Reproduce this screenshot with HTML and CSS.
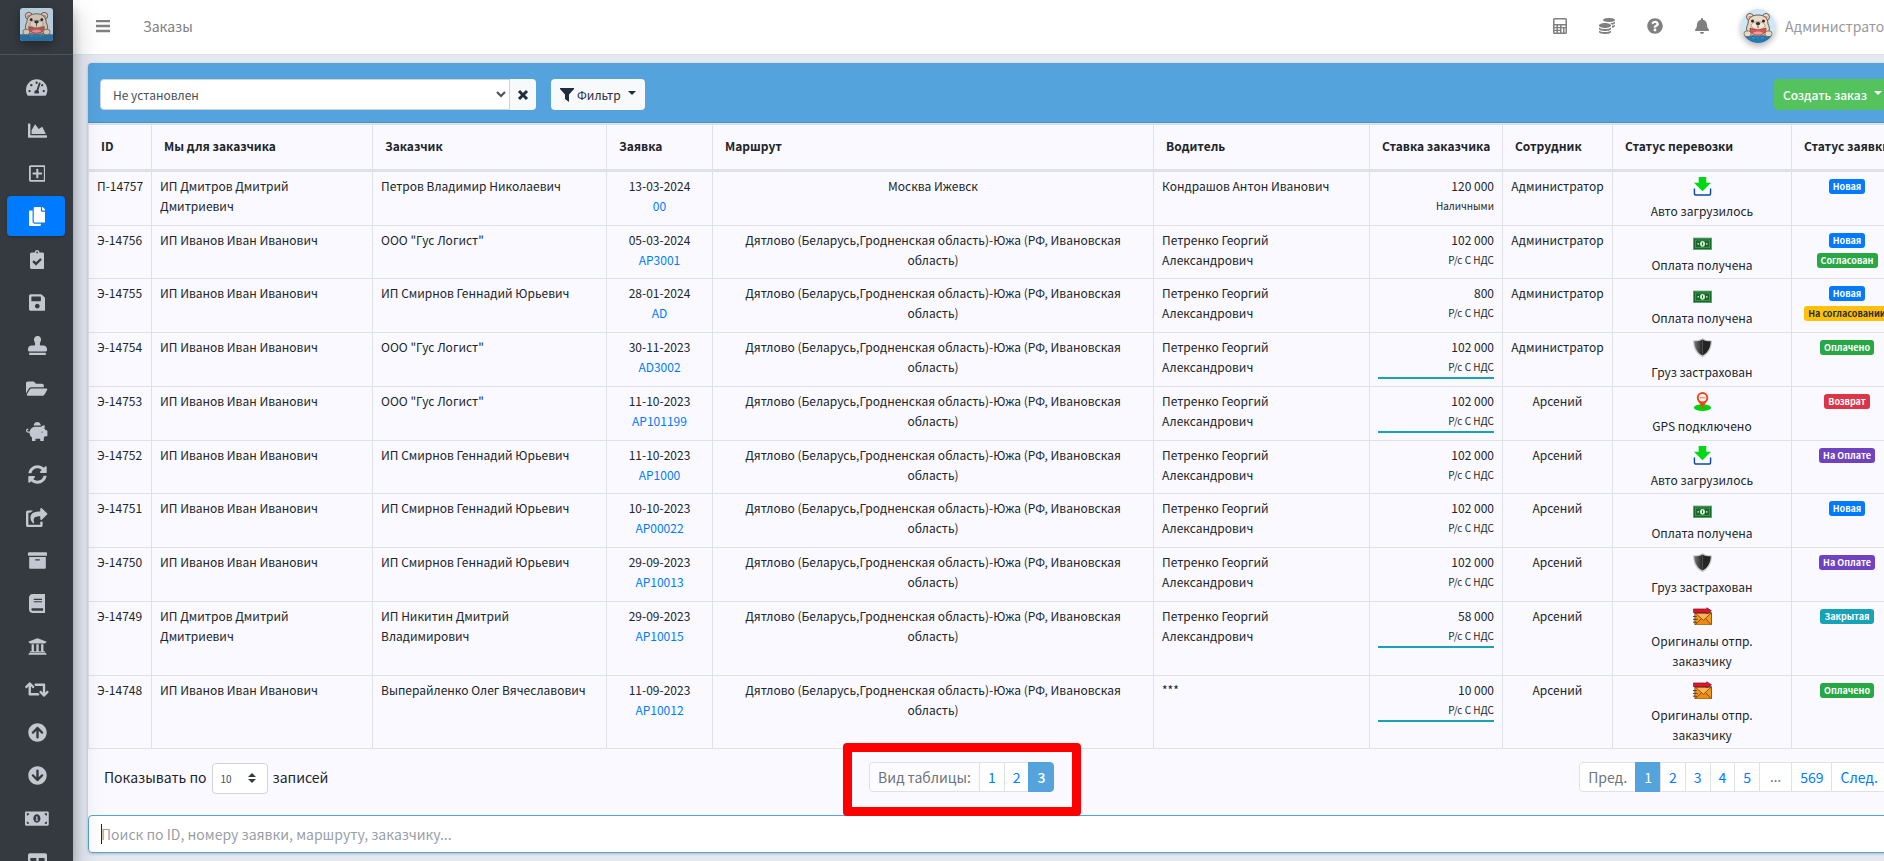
FILE: index.html
```
<!DOCTYPE html>
<html lang="ru">
<head>
    <meta charset="UTF-8">
    <meta name="viewport" content="width=device-width, initial-scale=1.0">
    <title>Заказы</title>
    <link rel="stylesheet" href="styles.css">
</head>
<body>
    <!-- Icon sprite -->
    <svg class="sprite" aria-hidden="true">
        <defs>
            <linearGradient id="shield-dark" x1="0" x2="1"><stop offset="0" stop-color="#777"/><stop offset="1" stop-color="#222"/></linearGradient>
        </defs>
        <symbol id="bear" viewBox="0 0 34 34">
            <rect width="34" height="34" fill="#cfe6f7"/>
            <circle cx="9" cy="8" r="3.5" fill="#efe3cf" stroke="#6b5a4c"/>
            <circle cx="9" cy="8.500" r="1.700" fill="#e58a90"/>
            <circle cx="25" cy="8" r="3.500" fill="#efe3cf" stroke="#6b5a4c"/>
            <circle cx="25" cy="8.500" r="1.700" fill="#e58a90"/>
            <path d="M7 15c0-6 4-9 10-9s10 3 10 9c1 2 2 4 1 7-2 4-6 5-11 5S8 26 6 22c-1-3 0-5 1-7z" fill="#e9dcc6" stroke="#6b5a4c"/>
            <path d="M9 19c3 1.500 13 1.500 16 0 .5 4-2 7-8 7s-8.500-3-8-7z" fill="#d9534f" stroke="#6b3a35" stroke-width=".6"/>
            <path d="M12 24c2-2 8-2 10 0-1 2-9 2-10 0z" fill="#f59aa0"/>
            <ellipse cx="17" cy="16.500" rx="7" ry="3.800" fill="#f3e8d6" stroke="#8b7a69" stroke-width=".6"/>
            <ellipse cx="17" cy="14.500" rx="2.300" ry="1.500" fill="#3a2d28"/>
            <path d="M17 15v4" stroke="#3a2d28" stroke-width=".8"/>
            <circle cx="11.500" cy="12" r="1.500" fill="#2c2320"/>
            <circle cx="22.500" cy="12" r="1.500" fill="#2c2320"/>
            <path d="M0 27h34v7H0z" fill="#2a76b0"/>
            <path d="M11 29h3M16 29h2M20 29h3" stroke="#1fb59a"/>
            <rect x="3" y="22" width="7" height="5.500" rx="2.500" fill="#e9dcc6" stroke="#6b5a4c" stroke-width=".8"/>
            <rect x="24" y="22" width="7" height="5.500" rx="2.500" fill="#e9dcc6" stroke="#6b5a4c" stroke-width=".8"/>
        </symbol>
        <symbol id="loaded" viewBox="0 0 20 20">
            <path d="M6 0h8v6h5l-9 9-9-9h5z" fill="#00d813"/>
            <path d="M1.500 12v5q0 2 2 2h13q2 0 2-2v-5" fill="none" stroke="#0b4aa2" stroke-width="1.500"/>
        </symbol>
        <symbol id="paid" viewBox="0 0 20 20">
            <rect x="0" y="7" width="20" height="13" fill="#5fa76b"/>
            <rect x="1" y="8" width="18" height="11" fill="#17692a"/>
            <rect x="2.500" y="9.500" width="15" height="8" fill="none" stroke="#4f9c5c" stroke-width=".8"/>
            <ellipse cx="10" cy="13.500" rx="2.600" ry="3" fill="#d4ecd6"/>
            <path d="M10 12v3" stroke="#17692a"/>
            <circle cx="5.500" cy="13.500" r=".9" fill="#c4e4c8"/>
            <circle cx="14.500" cy="13.500" r=".9" fill="#c4e4c8"/>
        </symbol>
        <symbol id="insured" viewBox="0 0 20 20">
            <path d="M10 0c3 2 6 2.500 10 2.500C20 10 17 17 10 20 3 17 0 10 0 2.500 4 2.500 7 2 10 0z" fill="#c9c9c9"/>
            <path d="M10 1.500v17C4 15.500 1.500 10 1.300 3.500 5 3.400 7.500 3 10 1.500z" fill="url(#shield-dark)"/>
            <path d="M10 1.500v17c6-3 8.500-8.500 8.700-15C15 3.400 12.500 3 10 1.500z" fill="#242424"/>
        </symbol>
        <symbol id="gps" viewBox="0 0 20 20">
            <ellipse cx="10" cy="16.500" rx="9" ry="3.500" fill="#00d20e"/>
            <path d="M10 17C8 12 4 10 4 6a6 6 0 0 1 12 0c0 4-4 6-6 11z" fill="#ff3d0d"/>
            <circle cx="10" cy="6" r="4" fill="#fff"/>
            <path d="M7 6h6" stroke="#ff8f70" stroke-width="1.500"/>
        </symbol>
        <symbol id="sent" viewBox="0 0 20 20">
            <rect x="2" y="6" width="17.500" height="12.500" fill="#f9971d" stroke="#5f3b13" stroke-width=".8"/>
            <path d="M2.500 18.500l6-6h5l5.500 6z" fill="#ef8a10"/>
            <path d="M2.500 6.500l8.500 7.500 8-7.500z" fill="#ffb652" stroke="#5f3b13" stroke-width=".8"/>
            <path d="M2.500 18.500l6-6M19 18.500l-5.500-6" stroke="#5f3b13" stroke-width=".8"/>
            <path d="M.5 2h14V.8l5 3.200-5 3.200V6H.500z" fill="#e8112d" stroke="#4d1218" stroke-width=".6"/>
            <path d="M0 10h4M0 13h5M0 16h4" stroke="#5f3b13"/>
        </symbol>
    </svg>

    <div class="wrapper">
        <aside class="sidebar">
            <a href="#" class="brand" aria-label="Главная"><svg class="brand-logo"><use href="#bear"/></svg></a>
            <nav class="side-nav">
                <a href="#" aria-label="Панель"><svg viewBox="0 0 576 512"><path d="M288 32C128.940 32 0 160.940 0 320c0 52.800 14.250 102.260 39.060 144.800 5.610 9.620 16.300 15.200 27.440 15.200h443c11.140 0 21.830-5.580 27.440-15.200C561.750 422.260 576 372.800 576 320c0-159.060-128.940-288-288-288zm0 64c14.710 0 26.580 10.130 30.320 23.650-1.110 2.260-2.640 4.230-3.450 6.670l-9.220 27.670c-5.130 3.490-10.970 6.010-17.640 6.010-17.670 0-32-14.330-32-32S270.330 96 288 96zM96 384c-17.670 0-32-14.330-32-32s14.330-32 32-32 32 14.330 32 32-14.330 32-32 32zm48-160c-17.670 0-32-14.330-32-32s14.330-32 32-32 32 14.330 32 32-14.330 32-32 32zm246.770-72.410l-61.330 184C343.130 347.330 352 364.540 352 384c0 11.720-3.380 22.550-8.880 32H232.880c-5.500-9.450-8.880-20.280-8.880-32 0-33.940 26.500-61.430 59.900-63.590l61.340-184.010c4.170-12.560 17.730-19.450 30.360-15.170 12.570 4.190 19.350 17.790 15.170 30.360zm14.660 57.200l15.520-46.550c3.470-1.290 7.130-2.230 11.050-2.230 17.670 0 32 14.330 32 32s-14.330 32-32 32c-11.380-.010-20.890-6.280-26.570-15.220zM480 384c-17.670 0-32-14.330-32-32s14.330-32 32-32 32 14.330 32 32-14.330 32-32 32z"/></svg></a>
                <a href="#" aria-label="Графики"><svg viewBox="0 0 512 512"><path d="M500 384c6.600 0 12 5.400 12 12v40c0 6.600-5.400 12-12 12H12c-6.600 0-12-5.400-12-12V76c0-6.600 5.400-12 12-12h40c6.600 0 12 5.400 12 12v308h436zM372.700 159.500L288 216l-85.300-113.700c-5.100-6.800-15.500-6.300-19.900 1L96 248v104h384l-89.900-187.800c-3.200-6.500-11.400-8.700-17.400-4.700z"/></svg></a>
                <a href="#" aria-label="Добавить"><svg viewBox="0 0 448 512"><path d="M352 240v32c0 6.600-5.400 12-12 12h-88v88c0 6.600-5.400 12-12 12h-32c-6.600 0-12-5.400-12-12v-88h-88c-6.600 0-12-5.400-12-12v-32c0-6.600 5.400-12 12-12h88v-88c0-6.600 5.400-12 12-12h32c6.600 0 12 5.400 12 12v88h88c6.600 0 12 5.400 12 12zm96-160v352c0 26.500-21.500 48-48 48H48c-26.500 0-48-21.500-48-48V80c0-26.500 21.500-48 48-48h352c26.500 0 48 21.500 48 48zm-48 346V86c0-3.300-2.700-6-6-6H54c-3.300 0-6 2.700-6 6v340c0 3.300 2.700 6 6 6h340c3.300 0 6-2.700 6-6z"/></svg></a>
                <a href="#" class="active" aria-label="Заказы"><svg viewBox="0 0 448 512"><path d="M320 448v40c0 13.255-10.745 24-24 24H24c-13.255 0-24-10.745-24-24V120c0-13.255 10.745-24 24-24h72v296c0 30.879 25.121 56 56 56h168zm0-344V0H152c-13.255 0-24 10.745-24 24v368c0 13.255 10.745 24 24 24h272c13.255 0 24-10.745 24-24V128H344c-13.200 0-24-10.800-24-24zm120.971-31.029L375.029 7.029A24 24 0 0 0 358.059 0H352v96h96v-6.059a24 24 0 0 0-7.029-16.970z"/></svg></a>
                <a href="#" aria-label="Задачи"><svg viewBox="0 0 384 512"><path d="M336 64h-80c0-35.300-28.700-64-64-64s-64 28.700-64 64H48C21.500 64 0 85.500 0 112v352c0 26.500 21.500 48 48 48h288c26.500 0 48-21.500 48-48V112c0-26.500-21.500-48-48-48zM192 40c13.300 0 24 10.700 24 24s-10.700 24-24 24-24-10.700-24-24 10.700-24 24-24zm121.200 231.800l-143 141.800c-4.700 4.700-12.300 4.600-17-.1l-82.600-83.300c-4.700-4.700-4.600-12.300.1-17L99.100 285c4.700-4.700 12.300-4.600 17 .1l46 46.400 106-105.200c4.700-4.700 12.300-4.600 17 .1l28.200 28.400c4.700 4.800 4.600 12.300-.1 17z"/></svg></a>
                <a href="#" aria-label="Сохранённые"><svg viewBox="0 0 448 512"><path d="M433.941 129.941l-83.882-83.882A48 48 0 0 0 316.118 32H48C21.490 32 0 53.490 0 80v352c0 26.510 21.490 48 48 48h352c26.510 0 48-21.490 48-48V163.882a48 48 0 0 0-14.059-33.941zM224 416c-35.346 0-64-28.654-64-64 0-35.346 28.654-64 64-64s64 28.654 64 64c0 35.346-28.654 64-64 64zm96-304.520V212c0 6.627-5.373 12-12 12H76c-6.627 0-12-5.373-12-12V108c0-6.627 5.373-12 12-12h228.520c3.183 0 6.235 1.264 8.485 3.515l3.480 3.480A11.996 11.996 0 0 1 320 111.480z"/></svg></a>
                <a href="#" aria-label="Печати"><svg viewBox="0 0 512 512"><path d="M32 512h448v-64H32v64zm384-256h-66.560c-16.260 0-29.440-13.180-29.440-29.440v-9.460c0-27.370 8.880-53.410 21.460-77.720 9.110-17.610 12.900-38.390 9.050-60.420-6.770-38.780-38.470-70.700-77.260-77.450C212.620-9.040 160 37.330 160 96c0 14.160 3.120 27.540 8.690 39.580C182.020 164.430 192 194.700 192 226.490v.070c0 16.260-13.180 29.440-29.440 29.440H96c-53.020 0-96 42.980-96 96v32c0 17.670 14.330 32 32 32h448c17.670 0 32-14.330 32-32v-32c0-53.020-42.980-96-96-96z"/></svg></a>
                <a href="#" aria-label="Документы"><svg viewBox="0 0 576 512"><path d="M572.694 292.093L500.270 416.248A63.997 63.997 0 0 1 444.989 448H45.025c-18.523 0-30.064-20.093-20.731-36.093l72.424-124.155A64 64 0 0 1 152 256h399.964c18.523 0 30.064 20.093 20.730 36.093zM152 224h328v-48c0-26.510-21.490-48-48-48H272l-64-64H48C21.490 64 0 85.490 0 112v278.046l69.077-118.418C86.214 242.250 117.989 224 152 224z"/></svg></a>
                <a href="#" aria-label="Финансы"><svg viewBox="0 0 576 512"><path d="M560 224h-29.500c-8.800-20-21.600-37.700-37.400-52.500L512 96h-32c-29.400 0-55.400 13.500-73 34.300-7.600-1.100-15.100-2.300-23-2.300H256c-77.400 0-141.900 55-156.800 128H56c-14.800 0-26.500-13.500-23.500-28.800C34.700 215.800 45.400 208 57 208h1c3.300 0 6-2.700 6-6v-20c0-3.300-2.700-6-6-6-28.500 0-53.900 20.400-57.500 48.600C-3.900 258.800 22.700 288 56 288h40c0 52.200 25.400 98.100 64 127.300V496c0 8.800 7.200 16 16 16h64c8.800 0 16-7.200 16-16v-48h128v48c0 8.800 7.200 16 16 16h64c8.800 0 16-7.200 16-16v-80.700c11.800-8.900 22.300-19.400 31.300-31.300H560c8.800 0 16-7.200 16-16V240c0-8.800-7.200-16-16-16zm-128 64c-8.800 0-16-7.200-16-16s7.200-16 16-16 16 7.200 16 16-7.200 16-16 16zM256 96h128c5.400 0 10.700.4 15.900.8 0-.3.1-.5.1-.8 0-53-43-96-96-96s-96 43-96 96c0 2.100.5 4.100.6 6.200 15.200-3.900 31-6.200 47.400-6.200z"/></svg></a>
                <a href="#" aria-label="Обмен"><svg viewBox="0 0 512 512"><path d="M370.720 133.280C339.458 104.008 298.888 87.962 255.848 88c-77.458.068-144.328 53.178-162.791 126.850-1.344 5.363-6.122 9.150-11.651 9.150H24.103c-7.498 0-13.194-6.807-11.807-14.176C33.933 94.924 134.813 8 256 8c66.448 0 126.791 26.136 171.315 68.685L463.030 40.970C478.149 25.851 504 36.559 504 57.941V192c0 13.255-10.745 24-24 24H345.941c-21.382 0-32.090-25.851-16.971-40.971l41.750-41.749zM32 296h134.059c21.382 0 32.090 25.851 16.971 40.971l-41.750 41.750c31.262 29.273 71.835 45.319 114.876 45.280 77.418-.070 144.315-53.144 162.787-126.849 1.344-5.363 6.122-9.150 11.651-9.150h57.304c7.498 0 13.194 6.807 11.807 14.176C478.067 417.076 377.187 504 256 504c-66.448 0-126.791-26.136-171.315-68.685L48.970 471.030C33.851 486.149 8 475.441 8 454.059V320c0-13.255 10.745-24 24-24z"/></svg></a>
                <a href="#" aria-label="Отправить"><svg viewBox="0 0 576 512"><path d="M568.482 177.448L424.479 313.433C409.300 327.768 384 317.140 384 295.985v-71.963c-144.575.970-205.566 35.113-164.775 171.353 4.483 14.973-12.846 26.567-25.006 17.330C155.252 383.105 120 326.488 120 269.339c0-143.937 117.599-172.500 264-173.312V24.012c0-21.174 25.317-31.768 40.479-17.448l144.003 135.988c10.020 9.463 10.028 25.425 0 34.896zM384 379.128V448H64V128h50.916a11.990 11.990 0 0 0 8.648-3.693c14.953-15.568 32.237-27.890 51.014-37.676C185.708 80.830 181.584 64 169.033 64H48C21.490 64 0 85.490 0 112v352c0 26.510 21.490 48 48 48h352c26.510 0 48-21.490 48-48v-88.806c0-8.288-8.197-14.066-16.011-11.302a71.830 71.830 0 0 1-34.189 3.377c-7.270-1.046-13.800 4.514-13.800 11.859z"/></svg></a>
                <a href="#" aria-label="Архив"><svg viewBox="0 0 512 512"><path d="M32 448c0 17.700 14.300 32 32 32h384c17.700 0 32-14.300 32-32V160H32v288zm160-212c0-6.600 5.400-12 12-12h104c6.600 0 12 5.400 12 12v8c0 6.600-5.400 12-12 12H204c-6.600 0-12-5.400-12-12v-8zM480 32H32C14.300 32 0 46.300 0 64v48c0 8.800 7.200 16 16 16h480c8.800 0 16-7.200 16-16V64c0-17.700-14.300-32-32-32z"/></svg></a>
                <a href="#" aria-label="Справочники"><svg viewBox="0 0 448 512"><path d="M448 360V24c0-13.300-10.700-24-24-24H96C43 0 0 43 0 96v320c0 53 43 96 96 96h328c13.300 0 24-10.700 24-24v-16c0-7.500-3.500-14.300-8.900-18.700-4.200-15.400-4.200-59.300 0-74.700 5.400-4.300 8.900-11.100 8.900-18.600zM128 134c0-3.300 2.700-6 6-6h212c3.300 0 6 2.700 6 6v20c0 3.300-2.700 6-6 6H134c-3.300 0-6-2.700-6-6v-20zm0 64c0-3.300 2.700-6 6-6h212c3.300 0 6 2.700 6 6v20c0 3.300-2.700 6-6 6H134c-3.300 0-6-2.700-6-6v-20zm253.400 250H96c-17.700 0-32-14.300-32-32 0-17.600 14.400-32 32-32h285.400c-1.900 17.100-1.900 46.900 0 64z"/></svg></a>
                <a href="#" aria-label="Банк"><svg viewBox="0 0 512 512"><path d="M496 128v16a8 8 0 0 1-8 8h-24v12c0 6.627-5.373 12-12 12H60c-6.627 0-12-5.373-12-12v-12H24a8 8 0 0 1-8-8v-16a8 8 0 0 1 4.941-7.392l232-88a7.996 7.996 0 0 1 6.118 0l232 88A8 8 0 0 1 496 128zm-24 304H40c-13.255 0-24 10.745-24 24v16a8 8 0 0 0 8 8h464a8 8 0 0 0 8-8v-16c0-13.255-10.745-24-24-24zM96 192v192H60c-6.627 0-12 5.373-12 12v20h416v-20c0-6.627-5.373-12-12-12h-36V192h-64v192h-64V192h-64v192h-64V192H96z"/></svg></a>
                <a href="#" aria-label="Переводы"><svg viewBox="0 0 640 512"><path d="M629.657 343.598L528.971 444.284c-9.373 9.372-24.568 9.372-33.941 0L394.343 343.598c-9.373-9.373-9.373-24.569 0-33.941l10.823-10.823c9.562-9.562 25.133-9.340 34.419.492L480 342.118V160H292.451a24.005 24.005 0 0 1-16.971-7.029l-16-16C244.361 121.851 255.069 96 276.451 96H520c13.255 0 24 10.745 24 24v222.118l40.416-42.792c9.285-9.831 24.856-10.054 34.419-.492l10.823 10.823c9.372 9.372 9.372 24.569-.001 33.941zm-265.138 15.431A23.999 23.999 0 0 0 347.548 352H160V169.881l40.416 42.792c9.286 9.831 24.856 10.054 34.419.491l10.822-10.822c9.373-9.373 9.373-24.569 0-33.941L144.971 67.716c-9.373-9.373-24.569-9.373-33.941 0L10.343 168.402c-9.373 9.373-9.373 24.569 0 33.941l10.822 10.822c9.562 9.562 25.133 9.340 34.419-.491L96 169.881V392c0 13.255 10.745 24 24 24h243.549c21.382 0 32.090-25.851 16.971-40.971l-16.001-16z"/></svg></a>
                <a href="#" aria-label="Исходящие"><svg viewBox="0 0 512 512"><path d="M8 256C8 119 119 8 256 8s248 111 248 248-111 248-248 248S8 393 8 256zm143.600 28.900l72.400-75.500V392c0 13.300 10.700 24 24 24h16c13.300 0 24-10.700 24-24V209.400l72.400 75.500c9.300 9.700 24.800 9.900 34.300.4l10.900-11c9.400-9.400 9.400-24.600 0-33.900L273 107.700c-9.400-9.400-24.600-9.400-33.900 0L106.300 240.400c-9.400 9.400-9.400 24.600 0 33.900l10.900 11c9.600 9.500 25.100 9.300 34.400-.4z"/></svg></a>
                <a href="#" aria-label="Входящие"><svg viewBox="0 0 512 512"><path transform="rotate(180 256 256)" d="M8 256C8 119 119 8 256 8s248 111 248 248-111 248-248 248S8 393 8 256zm143.600 28.900l72.400-75.500V392c0 13.300 10.700 24 24 24h16c13.300 0 24-10.700 24-24V209.400l72.400 75.500c9.300 9.700 24.800 9.900 34.300.4l10.900-11c9.400-9.400 9.400-24.600 0-33.900L273 107.700c-9.400-9.400-24.600-9.400-33.900 0L106.300 240.400c-9.400 9.400-9.400 24.600 0 33.900l10.900 11c9.600 9.500 25.100 9.300 34.400-.4z"/></svg></a>
                <a href="#" aria-label="Касса"><svg viewBox="0 0 640 512"><path d="M608 64H32C14.330 64 0 78.330 0 96v320c0 17.670 14.330 32 32 32h576c17.670 0 32-14.330 32-32V96c0-17.670-14.330-32-32-32zM48 400v-64c35.350 0 64 28.650 64 64H48zm0-224v-64h64c0 35.350-28.650 64-64 64zm272 192c-53.020 0-96-50.150-96-112 0-61.860 42.980-112 96-112s96 50.130 96 112c0 61.870-43 112-96 112zm272 32h-64c0-35.350 28.650-64 64-64v64zm0-224c-35.350 0-64-28.650-64-64h64v64zM300 200h36v92h18v24h-68v-24h18v-60h-16v-22z"/></svg></a>
                <a href="#" aria-label="Таблицы"><svg viewBox="0 0 512 512"><path fill-rule="evenodd" d="M48 32h416q48 0 48 48v352q0 48-48 48H48q-48 0-48-48V80q0-48 48-48zm16 128v96h160v-96zm224 0v96h160v-96zM64 320v96h160v-96zm224 0v96h160v-96z"/></svg></a>
            </nav>
        </aside>

        <div class="main">
            <header class="topbar">
                <button type="button" class="icon-btn" aria-label="Меню"><svg viewBox="0 0 448 512"><path d="M0 60h448v76H0zM0 218h448v76H0zM0 376h448v76H0z"/></svg></button>
                <a href="#" class="page-link">Заказы</a>
                <div class="tools">
                    <button type="button" class="icon-btn" aria-label="Калькулятор"><svg viewBox="0 0 448 512"><path fill-rule="evenodd" d="M48 0h352q48 0 48 48v416q0 48-48 48H48q-48 0-48-48V48Q0 0 48 0zm0 48v144h352V48zm0 192v48h64v-48zm112 0v48h64v-48zm112 0v48h128v-48zM48 328v48h64v-48zm112 0v48h64v-48zm112 0v136h48V328zm96 0v136h32V328zM48 416v48h64v-48zm112 0v48h64v-48z"/></svg></button>
                    <button type="button" class="icon-btn" aria-label="Баланс"><svg viewBox="0 0 512 512"><path d="M0 405.300V448c0 35.300 86 64 192 64s192-28.700 192-64v-42.700C342.700 434.400 267.200 448 192 448S41.300 434.400 0 405.300zM320 128c106 0 192-28.700 192-64S426 0 320 0 128 28.700 128 64s86 64 192 64zM0 300.400V352c0 35.300 86 64 192 64s192-28.700 192-64v-51.600c-41.300 34-116.900 51.600-192 51.600S41.300 334.400 0 300.400zm416 11c57.300-11.100 96-31.700 96-55.400v-42.700c-23.200 16.400-57.300 27.600-96 34.500v63.600zM192 160C86 160 0 195.800 0 240s86 80 192 80 192-35.800 192-80-86-80-192-80zm219.300 56.300c60-10.800 100.700-32 100.700-56.300v-42.700c-35.500 25.100-96.500 38.600-160.700 41.800 29.500 14.300 51.200 33.500 60 57.200z"/></svg></button>
                    <button type="button" class="icon-btn" aria-label="Помощь"><svg viewBox="0 0 512 512"><path d="M504 256c0 137-111 248-248 248S8 393 8 256C8 119.100 119 8 256 8s248 111.100 248 248zM262.700 90c-54.500 0-89.300 23-116.500 63.800-3.500 5.300-2.400 12.400 2.700 16.300l34.700 26.300c5.200 3.900 12.600 3 16.700-2.100 17.900-22.700 30.100-35.800 57.300-35.800 20.400 0 45.700 13.100 45.700 33 0 15-12.400 22.700-32.500 34C247.100 238.500 216 254.900 216 296v4c0 6.600 5.400 12 12 12h56c6.600 0 12-5.400 12-12v-1.300c0-28.500 83.200-29.600 83.200-106.700 0-58-60.200-102-116.500-102zM256 338c-25.400 0-46 20.600-46 46s20.600 46 46 46 46-20.600 46-46-20.600-46-46-46z"/></svg></button>
                    <button type="button" class="icon-btn" aria-label="Уведомления"><svg viewBox="0 0 448 512"><path d="M224 512c35.300 0 64-28.700 64-64H160c0 35.300 28.600 64 64 64zm215.400-149.700c-19.300-20.800-55.500-52-55.500-154.300 0-77.700-54.500-139.900-127.900-155.200V32c0-17.700-14.300-32-32-32s-32 14.300-32 32v20.800C118.600 68.100 64.100 130.300 64.100 208c0 102.300-36.200 133.500-55.500 154.300-6 6.500-8.700 14.200-8.600 21.700.1 16.400 13 32 32.100 32h383.800c19.100 0 32-15.600 32.100-32 .1-7.500-2.600-15.300-8.600-21.700z"/></svg></button>
                    <a href="#" class="user"><svg class="avatar"><use href="#bear"/></svg>Администратор</a>
                </div>
            </header>

            <main class="content">
                <section class="card">
                    <div class="card-header">
                        <div class="preset">
                            <select class="preset-select" aria-label="Набор фильтров"><option>Не установлен</option></select>
                            <button type="button" class="preset-clear" aria-label="Сбросить"><svg viewBox="0 0 12 12"><path d="M2 2l8 8M10 2l-8 8"/></svg></button>
                        </div>
                        <button type="button" class="btn btn-light"><svg class="funnel" viewBox="0 0 14 14"><path d="M0 0h14v1L9 6.500V14L5 11V6.500L0 1z"/></svg>Фильтр<span class="caret"></span></button>
                        <button type="button" class="btn btn-green">Создать заказ<span class="caret"></span></button>
                    </div>

                    <table class="orders">
                        <colgroup>
                            <col class="c-id"><col class="c-we"><col class="c-customer"><col class="c-request"><col class="c-route">
                            <col class="c-driver"><col class="c-rate"><col class="c-staff"><col class="c-delivery"><col class="c-status">
                        </colgroup>
                        <thead>
                            <tr>
                                <th>ID</th><th>Мы для заказчика</th><th>Заказчик</th><th>Заявка</th><th>Маршрут</th>
                                <th>Водитель</th><th>Ставка заказчика</th><th>Сотрудник</th><th>Статус перевозки</th><th>Статус заявки</th>
                            </tr>
                        </thead>
                        <tbody id="orders-body"></tbody>
                    </table>

                    <div class="table-footer">
                        <div class="length">
                            <label for="page-length">Показывать по</label>
                            <span class="length-box">
                                <select id="page-length"><option>10</option><option>25</option><option>50</option></select>
                                <svg viewBox="0 0 8 10"><path d="M0 4l4-4 4 4zM0 6h8l-4 4z"/></svg>
                            </span>
                            <span>записей</span>
                        </div>
                        <div class="pager view-pager">
                            <span class="muted">Вид таблицы:</span>
                            <a href="#">1</a>
                            <a href="#">2</a>
                            <a href="#" class="current strong">3</a>
                        </div>
                        <nav class="pager" aria-label="Страницы">
                            <span>Пред.</span>
                            <a href="#" class="current">1</a>
                            <a href="#">2</a>
                            <a href="#">3</a>
                            <a href="#">4</a>
                            <a href="#">5</a>
                            <span class="dots">…</span>
                            <a href="#">569</a>
                            <a href="#">След.</a>
                        </nav>
                    </div>
                    <input type="text" class="search" id="search" aria-label="Поиск" placeholder="Поиск по ID, номеру заявки, маршруту, заказчику...">
                </section>
            </main>
        </div>
    </div>

    <script>
        const ivanov = 'ИП Иванов Иван Иванович';
        const dmitrov = 'ИП Дмитров Дмитрий Дмитриевич';
        const smirnov = 'ИП Смирнов Геннадий Юрьевич';
        const gus = 'ООО "Гус Логист"';
        const route = 'Дятлово (Беларусь,Гродненская область)-Южа (РФ, Ивановская область)';
        const petrenko = 'Петренко Георгий Александрович';
        const vat = 'Р/с С НДС';

        const delivery = {
            loaded: 'Авто загрузилось',
            paid: 'Оплата получена',
            insured: 'Груз застрахован',
            gps: 'GPS подключено',
            sent: 'Оригиналы отпр. заказчику'
        };
        const badges = {
            'Новая': 'blue',
            'Согласован': 'green',
            'На согласовании': 'yellow',
            'Оплачено': 'green',
            'Возврат': 'red',
            'На Оплате': 'purple',
            'Закрытая': 'teal'
        };

        // id, we, customer, date, request, route, driver, rate, payment, underline, staff, delivery, statuses
        const orders = [
            ['П-14757', dmitrov, 'Петров Владимир Николаевич', '13-03-2024', '00', 'Москва Ижевск', 'Кондрашов Антон Иванович', '120 000', 'Наличными', false, 'Администратор', 'loaded', ['Новая']],
            ['Э-14756', ivanov, gus, '05-03-2024', 'АР3001', route, petrenko, '102 000', vat, false, 'Администратор', 'paid', ['Новая', 'Согласован']],
            ['Э-14755', ivanov, smirnov, '28-01-2024', 'AD', route, petrenko, '800', vat, false, 'Администратор', 'paid', ['Новая', 'На согласовании']],
            ['Э-14754', ivanov, gus, '30-11-2023', 'AD3002', route, petrenko, '102 000', vat, true, 'Администратор', 'insured', ['Оплачено']],
            ['Э-14753', ivanov, gus, '11-10-2023', 'АР101199', route, petrenko, '102 000', vat, true, 'Арсений', 'gps', ['Возврат']],
            ['Э-14752', ivanov, smirnov, '11-10-2023', 'АР1000', route, petrenko, '102 000', vat, false, 'Арсений', 'loaded', ['На Оплате']],
            ['Э-14751', ivanov, smirnov, '10-10-2023', 'АР00022', route, petrenko, '102 000', vat, false, 'Арсений', 'paid', ['Новая']],
            ['Э-14750', ivanov, smirnov, '29-09-2023', 'АР10013', route, petrenko, '102 000', vat, false, 'Арсений', 'insured', ['На Оплате']],
            ['Э-14749', dmitrov, 'ИП Никитин Дмитрий Владимирович', '29-09-2023', 'АР10015', route, petrenko, '58 000', vat, true, 'Арсений', 'sent', ['Закрытая']],
            ['Э-14748', ivanov, 'Выперайленко Олег Вячеславович', '11-09-2023', 'АР10012', route, '***', '10 000', vat, true, 'Арсений', 'sent', ['Оплачено']]
        ];

        document.getElementById('orders-body').innerHTML = orders.map(o => `
            <tr>
                <td>${o[0]}</td>
                <td>${o[1]}</td>
                <td>${o[2]}</td>
                <td class="center">${o[3]}<br><a href="#">${o[4]}</a></td>
                <td class="center route">${o[5]}</td>
                <td>${o[6]}</td>
                <td class="rate"><div>${o[7]}</div><div class="pay${o[9] ? ' underlined' : ''}">${o[8]}</div></td>
                <td class="center">${o[10]}</td>
                <td class="center delivery"><svg class="state-icon"><use href="#${o[11]}"/></svg>${delivery[o[11]]}</td>
                <td>${o[12].map(s => `<div class="badge-line"><span class="badge ${badges[s]}">${s}</span></div>`).join('')}</td>
            </tr>`).join('');

        document.getElementById('search').focus();
    </script>
</body>
</html>
```
FILE: styles.css
```
* {
    box-sizing: border-box;
}
html {
    overflow: hidden;
}
body {
    margin: 0;
    background-color: #e4e8f1;
    color: #212529;
    font-family: "Noto Sans CJK SC", "Noto Sans", sans-serif;
    font-size: 14px;
    line-height: 20px;
}
a {
    color: #007bff;
    text-decoration: none;
}
button, select, input {
    font-family: inherit;
}
button {
    cursor: pointer;
}
.sprite {
    position: absolute;
    width: 0;
    height: 0;
}
.wrapper {
    display: flex;
    height: 100vh;
}

/* Sidebar */
.sidebar {
    flex: 0 0 73px;
    z-index: 2;
    overflow: hidden;
    clip-path: inset(0 -40px 0 0);
    background-color: #343a40;
    box-shadow: 0 14px 28px rgba(0, 0, 0, .25), 0 10px 10px rgba(0, 0, 0, .22);
}
.brand {
    display: flex;
    justify-content: center;
    align-items: center;
    height: 55px;
    padding-bottom: 6px;
    border-bottom: 1px solid #4b545c;
}
.brand-logo {
    width: 33px;
    height: 33px;
    border-radius: 3px;
    box-shadow: 0 4px 10px rgba(0, 0, 0, .4);
    opacity: .85;
}
.side-nav {
    display: flex;
    flex-direction: column;
    gap: 3px;
    padding: 12px 8px 0 7px;
}
.side-nav a {
    display: flex;
    flex: none;
    justify-content: center;
    align-items: center;
    height: 40px;
    padding-left: 2px;
    border-radius: 4px;
}
.side-nav a:hover {
    background-color: #494e53;
}
.side-nav svg {
    height: 19px;
    fill: #c2c7d0;
}
.side-nav .active {
    background-color: #007bff;
    box-shadow: 0 1px 3px rgba(0, 0, 0, .24);
}
.side-nav .active svg {
    fill: #fff;
}

/* Top bar */
.main {
    flex: 1 0 auto;
}
.topbar {
    display: flex;
    align-items: center;
    height: 55px;
    padding: 0 18px 2px 23px;
    background-color: #fff;
    border-bottom: 1px solid #dee2e6;
}
.icon-btn {
    display: flex;
    padding: 0;
    border: 0;
    background: none;
}
.icon-btn svg {
    height: 16px;
    fill: #808080;
}
.page-link {
    margin-left: 33px;
    color: #808080;
}
.tools {
    display: flex;
    align-items: center;
    gap: 32px;
    margin-left: auto;
}
.user {
    display: flex;
    align-items: center;
    gap: 10px;
    color: #999;
}
.avatar {
    width: 34px;
    height: 34px;
    border-radius: 50%;
    box-shadow: 0 3px 6px rgba(0, 0, 0, .3);
}

/* Card */
.content {
    padding: 8px 8px 8px 15px;
}
.card {
    border-radius: 4px;
    background-color: #f9f9ff;
    box-shadow: 0 0 1px rgba(0, 0, 0, .13), 0 1px 3px rgba(0, 0, 0, .2);
}
.card-header {
    display: flex;
    align-items: flex-start;
    gap: 15px;
    padding: 16px 12px 12px;
    border-bottom: 1px solid #4a92c8;
    border-radius: 4px 4px 0 0;
    background-color: #55a3dd;
}
.preset {
    display: flex;
    width: 436px;
}
.preset-select {
    flex: 1;
    height: 31px;
    padding: 0 4px 0 8px;
    border: 1px solid #ced4da;
    border-radius: 4px 0 0 4px;
    background-color: #fff;
    color: #495057;
    font-size: 12px;
}
.preset-clear {
    display: flex;
    justify-content: center;
    align-items: center;
    width: 26px;
    padding: 0;
    border: 0;
    border-radius: 0 4px 4px 0;
    background-color: #f8f9fa;
}
.preset-clear svg {
    width: 12px;
    stroke: #1f2d3d;
    stroke-width: 3;
}
.btn {
    display: flex;
    align-items: center;
    height: 31px;
    padding: 0 9px;
    border: 0;
    border-radius: 4px;
    font-size: 12px;
}
.btn-light {
    background-color: #f8f9fa;
    color: #1f2d3d;
}
.btn-green {
    margin-left: auto;
    background-color: #55c35d;
    color: #fff;
    font-weight: 500;
}
.funnel {
    width: 14px;
    margin-right: 3px;
    fill: #1f2d3d;
}
.caret {
    margin: 0 0 3px 7px;
    border: 4px solid transparent;
    border-top-color: currentColor;
    border-bottom: 0;
}

/* Orders table */
.orders {
    width: 1815px;
    min-width: 100%;
    border-collapse: collapse;
    table-layout: fixed;
    font-size: 12px;
}
.c-id { width: 63px; }
.c-we { width: 221px; }
.c-customer { width: 234px; }
.c-request { width: 106px; }
.c-route { width: 441px; }
.c-driver { width: 216px; }
.c-rate { width: 133px; }
.c-staff { width: 110px; }
.c-delivery { width: 179px; }
.c-status { width: 111px; }
.orders th {
    height: 46px;
    padding: 0 12px 1px;
    border: 1px solid #dee2e6;
    border-top-width: 2px;
    border-bottom-width: 3px;
    text-align: left;
    white-space: nowrap;
}
.orders td {
    height: 54px;
    padding: 4px 8px;
    border: 1px solid #dee2e6;
    vertical-align: top;
}
.orders tr:nth-child(4n+2) td {
    height: 53px;
    padding-bottom: 3px;
}
.orders .center {
    text-align: center;
}
.orders .route {
    padding: 4px 32px;
}
.orders .rate {
    text-align: right;
}
.orders .delivery {
    padding-right: 32px;
    padding-left: 32px;
}
.pay {
    font-size: 10px;
}
.underlined {
    border-bottom: 2px solid #17a2b8;
}
.state-icon {
    display: block;
    width: 19px;
    height: 19px;
    margin: 1px auto 5px;
}
.badge-line {
    display: flex;
    justify-content: center;
    align-items: center;
    height: 20px;
    padding-top: 2px;
}
.badge {
    padding: 0 4px;
    border-radius: 3px;
    color: #fff;
    font-size: 9px;
    font-weight: 700;
    line-height: 15px;
    white-space: nowrap;
}
.blue { background-color: #007bff; }
.green { background-color: #28a745; }
.yellow { background-color: #ffc107; color: #1f2d3d; }
.red { background-color: #dc3545; }
.purple { background-color: #6f42c1; }
.teal { background-color: #17a2b8; }

/* Table footer */
.table-footer {
    display: flex;
    justify-content: space-between;
    align-items: flex-start;
    padding: 13px 16px 23px;
}
.length {
    display: flex;
    align-items: center;
    gap: 5px;
    height: 30px;
    padding-right: 16px;
}
.length-box {
    position: relative;
    margin-top: 4px;
}
.length-box select {
    display: block;
    width: 56px;
    height: 31px;
    padding: 0 8px;
    border: 1px solid #ced4da;
    border-radius: 4px;
    background-color: #fff;
    color: #495057;
    font-size: 10px;
    appearance: none;
}
.length-box svg {
    position: absolute;
    top: 10px;
    right: 12px;
    width: 8px;
    fill: #343a40;
    pointer-events: none;
}
.pager {
    display: flex;
    height: 30px;
}
.pager > * {
    padding: 4px 8px;
    margin-left: -1px;
    border: 1px solid #dee2e6;
    background-color: #fff;
}
.pager > span {
    color: #6c757d;
}
.pager > .dots {
    padding: 4px 10px;
    font-family: "Noto Sans", sans-serif;
}
.pager > :first-child {
    border-radius: 4px 0 0 4px;
}
.pager > :last-child {
    border-radius: 0 4px 4px 0;
}
.pager > .current {
    border-color: #55a3dd;
    background-color: #55a3dd;
    color: #fff;
}
.pager > .strong {
    font-weight: 500;
}
.view-pager {
    position: relative;
}
.view-pager .muted {
    background-color: #fcfcff;
}
/* Highlight frame around the view switcher */
.view-pager::after {
    content: "";
    position: absolute;
    inset: -19px -27px -24px;
    padding: 0;
    border: 9px solid #f00;
    border-radius: 4px;
    background: none;
    pointer-events: none;
}
.search {
    display: block;
    width: 100%;
    height: 38px;
    padding: 0 12px;
    border: 1px solid #55a3dd;
    border-radius: 4px;
    background-color: #fff;
    color: #495057;
    font-size: 14px;
    outline: none;
}
/* Steady cursor while the field is empty */
.search:placeholder-shown {
    background: linear-gradient(#212529, #212529) 12px center / 1px 20px no-repeat #fff;
    caret-color: transparent;
}
.search::placeholder {
    color: #999fa5;
}
```
